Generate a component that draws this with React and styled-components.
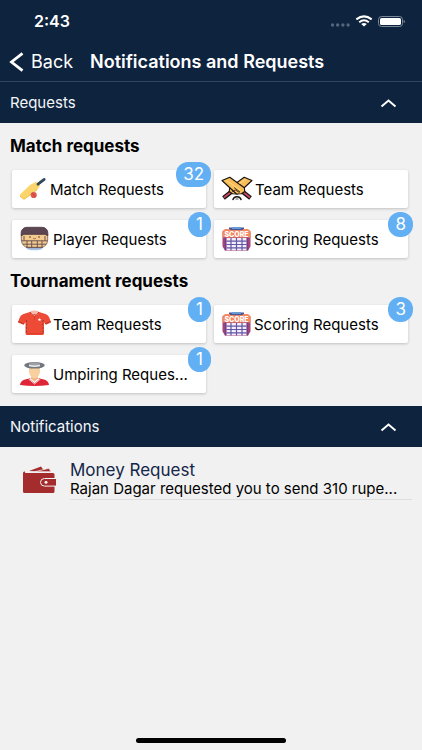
import { useState } from 'react'
import styled, { createGlobalStyle } from 'styled-components'

const GlobalStyle = createGlobalStyle`
  * {
    box-sizing: border-box;
  }

  body {
    margin: 0;
    background: #f1f1f1;
    color: #000;
    font-family: Inter, 'Liberation Sans', sans-serif;
  }

  button {
    font-family: inherit;
    border: 0;
    padding: 0;
    cursor: pointer;
  }
`

const Screen = styled.div`
  display: flex;
  flex-direction: column;
  min-height: 100vh;
`

const Header = styled.header`
  background: #0e233e;
  color: #fff;
  border-bottom: 1px solid #33465f;
`

const StatusBar = styled.div`
  display: flex;
  align-items: center;
  justify-content: space-between;
  height: 42px;
  padding: 0 17px 0 34px;
  font-size: 16px;
  font-weight: 600;
`

const NavBar = styled.nav`
  display: flex;
  align-items: center;
  gap: 17px;
  height: 39px;
  padding-left: 9px;
`

const BackLink = styled.a`
  display: flex;
  align-items: center;
  gap: 7px;
  color: #fff;
  font-size: 18px;
  text-decoration: none;
`

const PageTitle = styled.h1`
  margin: 0;
  font-size: 18px;
  font-weight: 600;
  white-space: nowrap;
`

const SectionHeading = styled.h2`
  margin: 0;
`

const SectionToggle = styled.button`
  display: flex;
  align-items: center;
  justify-content: space-between;
  width: 100%;
  height: 41px;
  padding: 0 25px 0 10px;
  background: #0e233e;
  color: #f4f6f9;
  font-size: 15px;
  font-weight: 400;

  svg {
    transform: ${({ $open }) => ($open ? 'none' : 'rotate(180deg)')};
  }
`

const RequestsBody = styled.div`
  padding-bottom: 13px;
`

const GroupTitle = styled.h3`
  margin: 0;
  padding: 1px 0 2px 10px;
  font-size: 17px;
  line-height: 44px;
  font-weight: 700;
`

const CardGrid = styled.div`
  display: grid;
  grid-template-columns: 1fr 1fr;
  gap: 12px 8px;
  padding: 0 14px 0 12px;
`

const Card = styled.button`
  position: relative;
  display: flex;
  align-items: center;
  height: 38px;
  background: #fff;
  color: #000;
  border-radius: 2px;
  box-shadow: 0 1px 3px rgba(0, 0, 0, 0.2);
  font-size: 15px;
  text-align: left;
  white-space: nowrap;

  svg {
    flex: none;
  }
`

const Badge = styled.span`
  position: absolute;
  top: -8px;
  right: -5px;
  min-width: 23px;
  padding: 0 7px;
  border-radius: 12px;
  background: #62aff4;
  color: #fff;
  font-size: 17px;
  line-height: 25px;
  text-align: center;
`

const NotificationList = styled.ul`
  margin: 0;
  padding: 13px 10px 0 22px;
  list-style: none;
`

const NotificationItem = styled.li`
  display: flex;
  align-items: center;
  gap: 12px;
`

const NotificationText = styled.div`
  flex: 1;
  min-width: 0;
  height: 40px;
  border-bottom: 1px solid #dfdfe0;
  white-space: nowrap;
`

const NotificationTitle = styled.h3`
  margin: 0;
  color: #14264a;
  font-size: 17px;
  line-height: 20px;
  font-weight: 400;
`

const NotificationMessage = styled.p`
  margin: 0;
  font-size: 15px;
  line-height: 18px;
`

const HomeIndicator = styled.div`
  width: 150px;
  height: 5px;
  margin: auto auto 7px;
  border-radius: 3px;
  background: #000;
`

const StatusIcons = () => (
  <svg width="75" height="16" viewBox="0 0 75 16" aria-hidden="true">
    <g fill="#56667c">
      <circle cx="2.5" cy="12" r="1.7" />
      <circle cx="7.7" cy="12" r="1.7" />
      <circle cx="12.9" cy="12" r="1.7" />
      <circle cx="18.1" cy="12" r="1.7" />
    </g>
    <g fill="none" stroke="#fff" strokeWidth="2">
      <path d="M26.3 6.4Q34 .3 41.7 6.4" />
      <path d="M29.2 9.2Q34 5.3 38.8 9.2" />
    </g>
    <path d="M31.2 11Q34 8.8 36.8 11L34 13.4Z" fill="#fff" />
    <rect x="48.5" y="3.5" width="24" height="10" rx="3" fill="none" stroke="#7b8898" />
    <rect x="50" y="5" width="21" height="7" rx="1.6" fill="#fff" />
    <path d="M73.7 7v3q1.2-.4 1.2-1.5T73.7 7Z" fill="#8793a2" />
  </svg>
)

const BackIcon = () => (
  <svg width="15" height="20" viewBox="0 0 15 20" aria-hidden="true">
    <path d="M13.5 1.3 2.5 10l11 8.7" fill="none" stroke="#fff" strokeWidth="2.8" />
  </svg>
)

const ChevronIcon = () => (
  <svg width="17" height="10" viewBox="0 0 17 10" aria-hidden="true">
    <path d="m1.5 8.5 7-6 7 6" fill="none" stroke="#fff" strokeWidth="1.9" />
  </svg>
)

const BatIcon = () => (
  <svg width="38" height="38" viewBox="0 0 38 38" aria-hidden="true">
    <path d="M8 26q-.5-1 .5-2L18 15l6-3.2 4.2 3.7-2.8 4L13 29q-1.3.6-2.2-.4Z" fill="#fbd56b" />
    <path d="m8 26 2.8 2.7q1.2.8 2.5-.2l12-9" fill="none" stroke="#efc04f" />
    <path d="m26 14.2 6.2-4.8" stroke="#31475a" strokeWidth="2.8" strokeLinecap="round" />
    <circle cx="21.7" cy="25" r="3.1" fill="#e2574c" />
    <path d="m20 23 3.5 4" stroke="#b93d3a" strokeWidth=".8" />
  </svg>
)

const HelmetIcon = () => (
  <svg width="41" height="38" viewBox="0 0 41 38" aria-hidden="true">
    <ellipse cx="22.5" cy="28.5" rx="8" ry="1.8" fill="#a9c4ec" />
    <path d="M9.3 14h26.4v6q-.5 6.500-7 7.700h-12.400q-6.500-1.200-7-7.700Z" fill="#f4cb8c" stroke="#75554f" strokeWidth=".8" />
    <path d="M9.2 15.5V12q1-4.500 6-4.700h14.600q5 .2 6 4.700v3.500q-1.500 0-2.600-1.300H11.800Q10.700 15.500 9.200 15.500Z" fill="#5d4652" stroke="#463640" strokeWidth=".8" />
    <g fill="none" stroke="#6b5355" strokeWidth="1">
      <path d="M9.500 20.800h26M11 24.200h23M14 27.300h17M15 20.800v6.500M19.700 20.800v7M25.300 20.800v7M30 20.800v6.500M12 16v4.800M33 16v4.800" />
    </g>
    <circle cx="18" cy="17" r=".8" fill="#453741" />
    <circle cx="27" cy="17" r=".8" fill="#453741" />
    <path d="M21 18.200q1.500 1.200 3 0" fill="none" stroke="#9b5b4b" strokeWidth=".8" />
  </svg>
)

const CrossedBatsIcon = () => (
  <svg width="41" height="38" viewBox="0 0 41 38" aria-hidden="true">
    <g stroke="#17110f" strokeLinejoin="round">
      <path d="m27 20.500 9.500 7.500" strokeWidth="4.200" />
      <path d="M19 20.500 9.500 28" strokeWidth="4.200" />
      <path d="m28 21.300 8 6.200M18 21.300l-8 6.200" stroke="#c94a66" strokeWidth="1.800" />
      <path d="m38 10.500-7.800-3.300-14.500 10.600-.5 3.700 3.300 2.300 5 .2Z" fill="#f7be58" strokeWidth="1.100" />
      <path d="m8 10.500 7.800-3.300 14.500 10.600.5 3.700-3.300 2.300-5 .2Z" fill="#f7be58" strokeWidth="1.100" />
    </g>
    <path d="m12.500 10.500 13.500 9.500M25.500 13.500l6-4.200" stroke="#ffd477" strokeWidth="1.200" />
    <path d="m18 21.500 3.500-1.500 4 2.500M20 17.500l6 4.500" fill="none" stroke="#3a261a" strokeWidth=".9" />
    <path d="M18.800 30.200Q19.500 26.700 23 26.700T27.200 30.200" fill="none" stroke="#17110f" strokeWidth="1.400" />
    <path d="M21.500 29h3" stroke="#17110f" strokeWidth=".7" />
  </svg>
)

const ScoreIcon = () => (
  <svg width="40" height="38" viewBox="0 0 40 38" aria-hidden="true">
    <path d="M15 7.500h15v3H15Z" fill="#4a5394" />
    <path d="M18 7h9v2h-9Z" fill="#679bd1" />
    <path d="M11 9.500h5l1.500 1h10l1.500-1h5l2.500 2v15l-2.500 4H11l-2.500-4v-15Z" fill="#a64678" />
    <path d="M8.500 11.500q1-2.500 4-2.500h3l1.500 1.300h11L29.500 9h3q3 0 4 2.500v6h-28Z" fill="#f5895f" />
    <path d="M12.500 18h20v12h-20Z" fill="#f4edfa" />
    <path d="M12.500 21.200h20M12.500 24.500h20M12.500 27.800h20M17 18v12.500M22.500 18v12.500M28 18v12.500" stroke="#6057a6" strokeWidth="1.200" />
    <path d="M11.500 17.500v13M33.500 17.500v13" stroke="#70418a" strokeWidth="1.400" />
    <text x="22.500" y="16.500" fill="#fff" fontSize="7" fontWeight="800" textAnchor="middle">
      SCORE
    </text>
  </svg>
)

const ShirtIcon = () => (
  <svg width="41" height="38" viewBox="0 0 41 38" aria-hidden="true">
    <path
      d="m18 7-6.500 2Q8.500 10 7.500 13L6 17.500l5.500 2.200 2-2.200v11q0 1.500 2 1.500H30q2 0 2-1.500v-11l2 2.200 5-2.200-1.500-4.500q-1-3-4-4L27 7q-4.500 3.500-9 0Z"
      fill="#ee4b36"
    />
    <path d="M18 6.500q4.500-1.800 9 0l-1.300 3-3.200 1.500-3.200-1.500Z" fill="#f9b8a9" />
    <path d="m18 7 3.200 3.700 1.300-1.700 1.300 1.700L27 7" fill="none" stroke="#cb3328" />
    <path d="m6.200 16.500 5.800 2.300M38.800 16.500 33 18.800" stroke="#ba372c" />
    <path d="M14.200 15q1 3 .3 6v7M31.300 15q-1 3-.3 6v7" fill="none" stroke="#8f3b37" strokeWidth="1" strokeDasharray="2 1.500" />
    <path d="M22.500 11v4M15 28.700h16" stroke="#cf3b2d" strokeWidth=".8" />
    <path d="m27.500 13 .5 1 1.200.2-.9.800.2 1.200-1-.6-1 .6.200-1.200-.9-.8 1.200-.2Z" fill="#fff" />
  </svg>
)

const UmpireIcon = () => (
  <svg width="41" height="38" viewBox="0 0 41 38" aria-hidden="true">
    <path d="M8 30q.5-4.500 5-5.500l6-1.500h7l6 1.500q4.500 1 5 5.500-14.500 2-29 0Z" fill="#df2636" />
    <path d="M19.200 20.500h6.600v4l-3.300 2.500-3.300-2.500Z" fill="#efb780" />
    <path d="m18 23.500 4.500 4 4.500-4" fill="none" stroke="#fff" strokeWidth="1.300" />
    <path d="m16.500 24 6 5 6-5" fill="none" stroke="#fff" strokeWidth=".7" />
    <path d="M17 12h11v5q-.5 4-3.500 5.800-2 1.200-4 0Q17.500 21 17 17Z" fill="#f8d09e" />
    <ellipse cx="22.500" cy="10.300" rx="10.300" ry="3.300" fill="#73777e" />
    <path d="M17 10.500q-.5-3.300 5.500-3.300t5.500 3.300q-5.500 1.200-11 0Z" fill="#9da1a7" />
    <path d="M17 9.700q5.500 1.500 11 0v1.500q-5.500 1.500-11 0Z" fill="#eceef0" />
  </svg>
)

const WalletIcon = () => (
  <svg width="36" height="30" viewBox="0 0 36 30" aria-hidden="true">
    <path d="m7 6 12-4.500 2.500 3.500-7 1.300Z" fill="#a52c2c" />
    <path d="m13 6.700 14-3.400 2 3.400Z" fill="#a52c2c" stroke="#f1f1f1" strokeWidth=".7" />
    <path d="M1 8q0-1.500 1.500-1.500H3q-.5 1.500 1 1.500h27q1.500 0 1.500 1.500v17q0 1.500-1.500 1.500H2.500Q1 28 1 26.500Z" fill="#a52c2c" />
    <path d="M34.500 13.500h-12q-4 0-4 3.800t4 3.800h12Z" fill="#a52c2c" stroke="#f1f1f1" />
    <circle cx="24" cy="17.300" r="1.500" fill="#f1f1f1" />
  </svg>
)

const matchRequests = [
  { label: 'Match Requests', Icon: BatIcon, count: 32 },
  { label: 'Team Requests', Icon: CrossedBatsIcon },
  { label: 'Player Requests', Icon: HelmetIcon, count: 1 },
  { label: 'Scoring Requests', Icon: ScoreIcon, count: 8 },
]

const tournamentRequests = [
  { label: 'Team Requests', Icon: ShirtIcon, count: 1 },
  { label: 'Scoring Requests', Icon: ScoreIcon, count: 3 },
  { label: 'Umpiring Reques...', Icon: UmpireIcon, count: 1 },
]

const RequestGroup = ({ title, items }) => (
  <section>
    <GroupTitle>{title}</GroupTitle>
    <CardGrid>
      {items.map(({ label, Icon, count }) => (
        <Card key={label} type="button">
          <Icon />
          {label}
          {count && <Badge>{count}</Badge>}
        </Card>
      ))}
    </CardGrid>
  </section>
)

const Section = ({ title, children }) => {
  const [open, setOpen] = useState(true)

  return (
    <section>
      <SectionHeading>
        <SectionToggle type="button" $open={open} aria-expanded={open} onClick={() => setOpen(!open)}>
          {title}
          <ChevronIcon />
        </SectionToggle>
      </SectionHeading>
      {open && children}
    </section>
  )
}

const App = () => {
  return (
    <Screen>
      <GlobalStyle />
      <Header>
        <StatusBar>
          <span>2:43</span>
          <StatusIcons />
        </StatusBar>
        <NavBar>
          <BackLink href="#back">
            <BackIcon />
            Back
          </BackLink>
          <PageTitle>Notifications and Requests</PageTitle>
        </NavBar>
      </Header>
      <main>
        <Section title="Requests">
          <RequestsBody>
            <RequestGroup title="Match requests" items={matchRequests} />
            <RequestGroup title="Tournament requests" items={tournamentRequests} />
          </RequestsBody>
        </Section>
        <Section title="Notifications">
          <NotificationList>
            <NotificationItem>
              <WalletIcon />
              <NotificationText>
                <NotificationTitle>Money Request</NotificationTitle>
                <NotificationMessage>Rajan Dagar requested you to send 310 rupe...</NotificationMessage>
              </NotificationText>
            </NotificationItem>
          </NotificationList>
        </Section>
      </main>
      <HomeIndicator />
    </Screen>
  )
}

export default App
